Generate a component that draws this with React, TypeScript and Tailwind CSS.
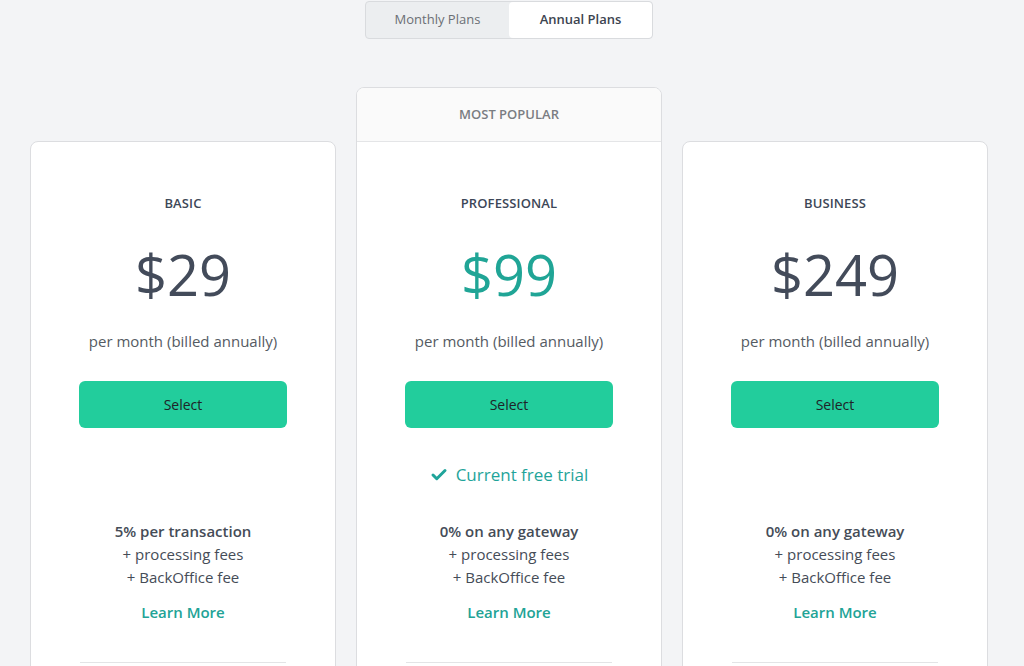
import { Check } from 'lucide-react'

type Plan = {
  name: string
  price: string
  highlight?: boolean
  fee: string
}

const plans: Plan[] = [
  { name: 'BASIC', price: '$29', fee: '5% per transaction' },
  { name: 'PROFESSIONAL', price: '$99', fee: '0% on any gateway', highlight: true },
  { name: 'BUSINESS', price: '$249', fee: '0% on any gateway' },
]

function PlanBody({ plan }: { plan: Plan }) {
  return (
    <div className="flex flex-col items-center pt-[51px]">
      <h3 className="text-[13px] leading-5 font-semibold text-[#3d4757] tracking-[0.01em]">
        {plan.name}
      </h3>
      <div
        className={
          plan.highlight
            ? 'mt-[25px] text-[56px] leading-[72px] text-[#20a596]'
            : 'mt-[25px] text-[56px] leading-[72px] text-[#434b5a]'
        }
      >
        {plan.price}
      </div>
      <p className="mt-[19px] text-[15px] leading-6 text-[#555b63]">per month (billed annually)</p>
      <button className="mt-[28px] w-[208px] h-[47px] rounded-md bg-[#22cd9c] text-[14px] text-[#1f2328]">
        Select
      </button>
      <div className="mt-[35px] h-6 flex items-center gap-2 text-[17px] leading-6 text-[#1fa49a]">
        {plan.highlight && (
          <>
            <Check className="w-[18px] h-[18px]" strokeWidth={4} />
            <span>Current free trial</span>
          </>
        )}
      </div>
      <div className="mt-[33px] flex flex-col items-center text-[15px] leading-[23px] text-[#454c57]">
        <span className="font-semibold">{plan.fee}</span>
        <span>+ processing fees</span>
        <span>+ BackOffice fee</span>
      </div>
      <a className="mt-[11px] text-[15px] leading-6 font-semibold text-[#22a396]">Learn More</a>
      <div className="mt-[38px] w-[206px] border-t border-[#e3e4e6]" />
      <div className="h-10" />
    </div>
  )
}

export default function App() {
  return (
    <div
      className="h-[666px] overflow-hidden bg-[#f3f4f6]"
      style={{ fontFamily: '"Open Sans", "Noto Sans", sans-serif' }}
    >
      <div className="w-[958px] ml-[30px]">
        <div className="flex justify-center pt-px">
          <div className="flex w-[288px] h-[38px] rounded border border-[#d9dbde] bg-[#eceef0] overflow-hidden text-[13px]">
            <button className="w-[143px] text-[#6b6f75]">Monthly Plans</button>
            <button className="flex-1 bg-white rounded font-semibold text-[#3c4450]">Annual Plans</button>
          </div>
        </div>

        <div className="flex gap-5 mt-[48px] items-start">
          {plans.map((plan) =>
            plan.highlight ? (
              <div
                key={plan.name}
                className="w-[306px] rounded-lg border border-[#dcdde0] bg-white overflow-hidden"
              >
                <div className="h-[54px] flex items-center justify-center bg-[#fafafa] border-b border-[#e4e5e7] text-[13px] font-semibold text-[#7a7d82]">
                  MOST POPULAR
                </div>
                <PlanBody plan={plan} />
              </div>
            ) : (
              <div
                key={plan.name}
                className="w-[306px] mt-[54px] rounded-lg border border-[#dcdde0] bg-white"
              >
                <PlanBody plan={plan} />
              </div>
            ),
          )}
        </div>
      </div>
    </div>
  )
}
